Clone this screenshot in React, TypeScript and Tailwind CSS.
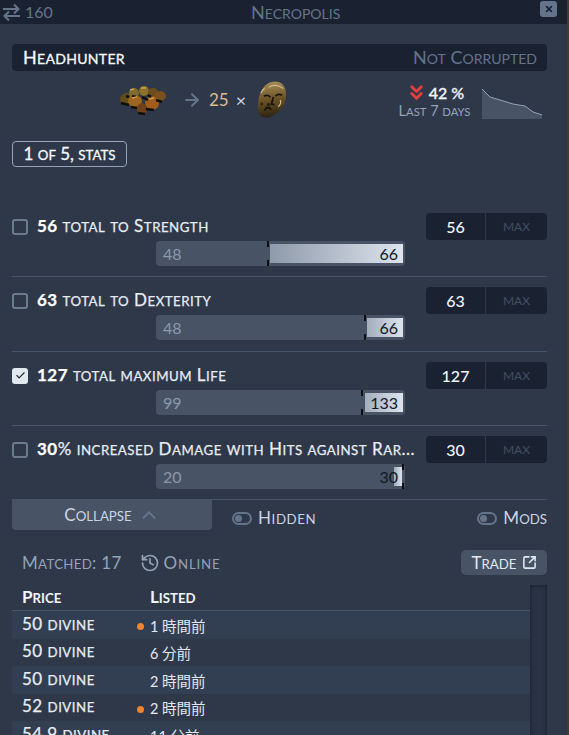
import React from "react";
import { ArrowRight, Check, ChevronUp, ChevronsDown, History, SquareArrowOutUpRight, X } from "lucide-react";

const font = { fontFamily: "Lato, 'Noto Sans CJK JP', sans-serif" };

// lower case letters drawn as smaller capitals, the game font has them this big
function Sc({ text }: { text: string }) {
  const parts = text.match(/[a-z]+|[^a-z]+/g) ?? [];
  return (
    <span className="whitespace-pre">
      {parts.map((p, i) =>
        /[a-z]/.test(p) ? (
          <span key={i} className="uppercase text-[0.78em]">
            {p}
          </span>
        ) : (
          <span key={i}>{p}</span>
        )
      )}
    </span>
  );
}

const stats = [
  { value: "56", label: " total to Strength", min: "48", max: "66", tick: 111, fillFrom: 114, fillTo: 247, checked: false, grad: "from-[#8f9aaa] to-[#dde4ed]", h: "h-[74px]" },
  { value: "63", label: " total to Dexterity", min: "48", max: "66", tick: 208, fillFrom: 211, fillTo: 247, checked: false, grad: "from-[#a3adbb] to-[#dde4ed]", h: "h-[75px]" },
  { value: "127", label: " total maximum Life", min: "99", max: "133", tick: 205, fillFrom: 209, fillTo: 247, checked: true, grad: "from-[#a3adbb] to-[#dde4ed]", h: "h-[74px]" },
  { value: "30", label: "% increased Damage with Hits against Rar...", min: "20", max: "30", tick: 246, fillFrom: 238, fillTo: 246, checked: false, grad: "from-[#a3adbb] to-[#dde4ed]", h: "h-[73px]" },
];

const rows = [
  { price: "50 divine", time: "1 時間前", dot: true, h: "h-[28px]" },
  { price: "50 divine", time: "6 分前", dot: false, h: "h-[27px]" },
  { price: "50 divine", time: "2 時間前", dot: false, h: "h-[28px]" },
  { price: "52 divine", time: "2 時間前", dot: true, h: "h-[27px]" },
  { price: "54.9 divine", time: "11 分前", dot: false, h: "h-[28px]" },
];

function StatRow({ stat, last }: { stat: (typeof stats)[number]; last: boolean }) {
  return (
    <div className={`${stat.h} pt-[10px] ${last ? "" : "border-b border-[#47566a]"}`}>
      <div className="flex items-center h-[27px]">
        {stat.checked ? (
          <span className="w-[16px] h-[16px] rounded-[3px] bg-[#e2e8f0] flex items-center justify-center shrink-0">
            <Check size={11} strokeWidth={2.5} className="text-[#1e293b]" />
          </span>
        ) : (
          <span className="w-[16px] h-[16px] rounded-[3px] border-2 border-[#6b7a8f] shrink-0" />
        )}
        <span className="ml-[9px] whitespace-nowrap text-[17px] tracking-[0.5px] text-[#e8edf3] leading-[20px] [-webkit-text-stroke:0.25px]">
          <b className="text-white font-bold">{stat.value}</b>
          <Sc text={stat.label} />
        </span>
        <div className="ml-auto w-[121px] h-[27px] rounded-[4px] bg-[#1a2232] flex text-[16px] shrink-0">
          <span className="w-[60px] flex items-center justify-center text-[#f1f5f9] font-medium border-r border-[#2e3848]">{stat.value}</span>
          <span className="flex-1 flex items-center justify-center text-[#414e61] text-[12px]">MAX</span>
        </div>
      </div>
      <div className="relative mt-[1px] ml-[144px] w-[249px] h-[25px] rounded-[4px] bg-[#485466] flex items-center justify-between pl-[7px] pr-[7px] text-[16px]">
        <span className="text-[#8c99ab]">{stat.min}</span>
        <div
          className={`absolute top-[3px] bottom-[3px] bg-gradient-to-r ${stat.grad}`}
          style={{ left: stat.fillFrom, width: stat.fillTo - stat.fillFrom }}
        />
        <div className="absolute top-0 h-[6px] w-[2px] bg-[#0c0f14]" style={{ left: stat.tick }} />
        <div className="absolute bottom-0 h-[6px] w-[2px] bg-[#0c0f14]" style={{ left: stat.tick }} />
        <span className="relative text-[#111827]">{stat.max}</span>
      </div>
    </div>
  );
}

function Toggle({ label, spaced }: { label: string; spaced?: boolean }) {
  return (
    <div className={`h-[24px] flex items-center text-[17px] text-[#cbd5e1] ${spaced ? "tracking-[0.6px]" : ""}`}>
      <span className="w-[20px] h-[13px] rounded-full border-2 border-[#64748b] flex items-center pl-[1px]">
        <span className="w-[7px] h-[7px] rounded-full bg-[#64748b]" />
      </span>
      <span className="ml-[6px]">
        <Sc text={label} />
      </span>
    </div>
  );
}

export default function App() {
  return (
    <div style={font} className="w-[569px] h-[735px] overflow-hidden bg-[#3f3d33] flex">
      <div className="w-[567px] h-[735px] bg-[#2e3849] shrink-0">
        <div className="h-[24px] bg-[#1a2232] flex items-center relative pl-[2px] text-[#64748b]">
          <svg width="19" height="18" viewBox="0 0 19 18" fill="none" stroke="#64748b" strokeWidth="2">
            <path d="M1 6h15M12 1.500l4.500 4.500-4.500 4.500M18 13H3M7 8.500l-4.500 4.500 4.500 4.500" />
          </svg>
          <span className="ml-[4px] text-[16px]">160</span>
          <span className="absolute left-[251px] text-[18px] whitespace-nowrap">
            <Sc text="Necropolis" />
          </span>
          <span className="absolute left-[540px] top-[1px] w-[17px] h-[16px] rounded-[3px] bg-[#64748b] flex items-center justify-center">
            <X size={10} strokeWidth={3.5} className="text-[#111827]" />
          </span>
        </div>

        <div className="pl-[12px] pr-[20px]">
          <div className="mt-[20px] h-[27px] rounded-[4px] bg-[#1a2232] flex items-center justify-between pl-[11px] pr-[10px]">
            <span className="text-[18px] tracking-[0.3px] text-[#f8fafc] [-webkit-text-stroke:0.3px]">
              <Sc text="Headhunter" />
            </span>
            <span className="text-[18px] text-[#64748b]">
              <Sc text="Not Corrupted" />
            </span>
          </div>

          <div className="relative h-[50px] mt-[4px] flex items-center">
            <svg width="50" height="32" viewBox="0 0 50 32" className="ml-[106px] shrink-0">
              <ellipse cx="9" cy="15" rx="7" ry="6" fill="#5f4e1c" />
              <ellipse cx="16" cy="9" rx="5" ry="5" fill="#7d6c30" />
              <ellipse cx="26" cy="7" rx="5" ry="5" fill="#8d7029" />
              <ellipse cx="35" cy="8" rx="5" ry="4" fill="#6a4e1c" />
              <ellipse cx="42" cy="12" rx="6" ry="5" fill="#7b4f1e" />
              <ellipse cx="17" cy="17" rx="7" ry="6" fill="#9c661f" />
              <ellipse cx="34" cy="19" rx="7" ry="7" fill="#a05d1c" />
              <ellipse cx="24" cy="25" rx="5" ry="6" fill="#6e4118" />
              <path d="M3 19l8 2M13 23l6 1M28 25l8 1M20 29l7 1M24 13l6 3M38 16l6 2M14 12l4 1M30 11l3 2M8 12l3 1" stroke="#110e09" strokeWidth="2.500" />
              <path d="M23 4l5 0M14 14l5-1M31 15l5-1M12 6l4-1" stroke="#cf9f47" strokeWidth="1.300" />
            </svg>
            <ArrowRight size={20} strokeWidth={2.5} className="ml-[14px] text-[#64748b] shrink-0" />
            <span className="ml-[7px] text-[17px] text-[#dcbc96]">25</span>
            <span className="ml-[7px] text-[18px] text-[#cbd5e1]">×</span>
            <svg width="31" height="38" viewBox="0 0 32 38" className="ml-[10px] shrink-0">
              <defs>
                <linearGradient id="mask" x1="0.450" y1="0" x2="0.550" y2="1">
                  <stop offset="0" stopColor="#a58c58" />
                  <stop offset="0.500" stopColor="#6a5226" />
                  <stop offset="1" stopColor="#2a200f" />
                </linearGradient>
              </defs>
              <path d="M20 0c7 0 11 5 11 13 0 8-3 14-8 18-4 3-9 7-14 6-5-1-7-4-7-9 0-9 1-15 5-21 3-4 7-7 13-7z" fill="url(#mask)" />
              <path d="M8 15c2-1 5-1 7 1M20 15c2-2 5-2 7-1M18 16l-2 7 3 1M9 30c1-4 4-4 7-1" stroke="#1a1208" strokeWidth="1.800" fill="none" />
              <path d="M13 6c4-3 10-3 15 1M5 12c1-2 2-4 4-5M25 19c1 2 0 5-2 7" stroke="#d0bd8a" strokeWidth="1.200" fill="none" />
              <circle cx="13" cy="24" r="2" fill="#2f2411" />
              <circle cx="6" cy="23" r="1.500" fill="#2f2411" />
            </svg>
            <div className="absolute left-[386px] top-[8px] w-[73px] flex flex-col items-center">
              <div className="flex items-center h-[20px]">
                <ChevronsDown size={23} strokeWidth={3} className="text-[#e53e3e] -mt-[2px]" />
                <span className="ml-[1px] text-[16px] font-medium text-[#f1f5f9] [-webkit-text-stroke:0.3px]">42 %</span>
              </div>
              <span className="text-[14.5px] leading-[16px] text-[#94a3b8] whitespace-nowrap">
                <Sc text="Last 7 days" />
              </span>
            </div>
            <svg width="60" height="31" viewBox="0 0 60 31" className="absolute left-[470px] top-[13px]">
              <path d="M0 1l8 8 10 3 13 4 12 2 8 6 9 3v7H0z" fill="#485466" />
              <path d="M0 1l8 8 10 3 13 4 12 2 8 6 9 3" fill="none" stroke="#94a3b8" strokeWidth="1" />
            </svg>
          </div>

          <div className="mt-[16px] w-[115px] h-[26px] rounded-[4px] border border-[#94a3b8] flex items-center justify-center text-[17px] text-[#f8fafc] whitespace-nowrap [-webkit-text-stroke:0.3px]">
            <Sc text="1 of 5, stats" />
          </div>

          <div className="mt-[36px]">
            {stats.map((s, i) => (
              <StatRow key={s.label} stat={s} last={i === stats.length - 1} />
            ))}
          </div>

          <div className="border-t border-[#47566a] flex items-start h-[32px]">
            <div className="w-[200px] h-[30px] rounded-b-[4px] bg-[#485466] flex items-center justify-center text-[#cbd5e1] text-[17px]">
              <Sc text="Collapse" />
              <ChevronUp size={22} strokeWidth={2} className="ml-[6px] text-[#64748b]" />
            </div>
            <div className="ml-[20px] mt-[6px]">
              <Toggle label="Hidden" spaced />
            </div>
            <div className="ml-auto mt-[6px]">
              <Toggle label="Mods" />
            </div>
          </div>

          <div className="mt-[19px] flex items-center h-[25px] text-[17px] text-[#94a3b8]">
            <span className="ml-[10px] tracking-[0.3px]">
              <Sc text="Matched: 17" />
            </span>
            <History size={20} strokeWidth={2} className="ml-[18px]" />
            <span className="ml-[4px] tracking-[0.8px]">
              <Sc text="Online" />
            </span>
            <div className="ml-auto w-[86px] h-[25px] rounded-[5px] bg-[#485466] flex items-center justify-center text-[#e2e8f0] text-[17px]">
              <Sc text="Trade" />
              <SquareArrowOutUpRight size={15} strokeWidth={2.5} className="ml-[5px]" />
            </div>
          </div>

          <div className="mt-[10px] flex">
            <div className="flex-1">
              <div className="h-[26px] flex items-end pb-[1px] border-b border-[#47566a] font-bold text-[17px] text-[#f1f5f9]">
                <span className="ml-[10px] w-[128px]">
                  <Sc text="Price" />
                </span>
                <span>
                  <Sc text="Listed" />
                </span>
              </div>
              {rows.map((r, i) => (
                <div key={i} className={`${r.h} flex items-center relative ${i % 2 === 0 ? "bg-[#323e51]" : ""}`}>
                  <span className="ml-[10px] w-[128px] -mt-[3px] text-[#e8edf3] text-[17px] tracking-[0.5px] [-webkit-text-stroke:0.25px]">
                    <Sc text={r.price} />
                  </span>
                  <span className="text-[#e2e8f0] text-[14.5px] mt-[3px]">{r.time}</span>
                  {r.dot && <span className="absolute left-[125px] top-[12px] w-[7px] h-[7px] rounded-full bg-[#f0852d]" />}
                </div>
              ))}
            </div>
            <div className="w-[17px] h-[160px] bg-[#2a3446] shadow-[inset_0_0_5px_#161c28]" />
          </div>
        </div>
      </div>
    </div>
  );
}
